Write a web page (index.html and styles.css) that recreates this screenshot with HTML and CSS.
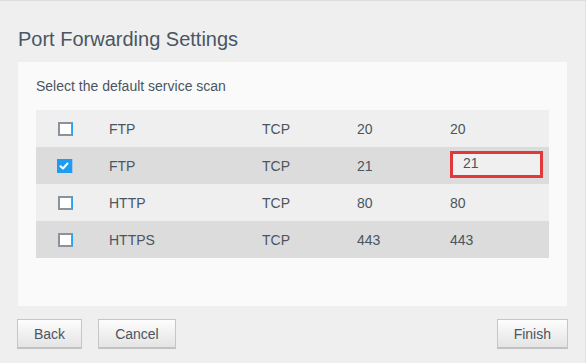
FILE: index.html
```html
<!DOCTYPE html>
<html>
<head>
<meta charset="utf-8">
<link rel="stylesheet" href="styles.css">
</head>
<body>
<div class="page">
  <h1 class="title">Port Forwarding Settings</h1>
  <div class="panel">
    <p class="lead">Select the default service scan</p>
    <div class="table">
      <div class="row">
        <span class="cell"><span class="check"></span></span>
        <span class="cell">FTP</span>
        <span class="cell">TCP</span>
        <span class="cell">20</span>
        <span class="cell">20</span>
      </div>
      <div class="row alt">
        <span class="cell"><span class="check on"><svg viewBox="0 0 14 14" width="14" height="14"><path d="M3.5 7.2 L6 9.5 L10.5 4.5" fill="none" stroke="#fff" stroke-width="2" stroke-linecap="round" stroke-linejoin="round"/></svg></span></span>
        <span class="cell">FTP</span>
        <span class="cell">TCP</span>
        <span class="cell">21</span>
        <span class="cell"><span class="input">21</span></span>
      </div>
      <div class="row">
        <span class="cell"><span class="check"></span></span>
        <span class="cell">HTTP</span>
        <span class="cell">TCP</span>
        <span class="cell">80</span>
        <span class="cell">80</span>
      </div>
      <div class="row alt">
        <span class="cell"><span class="check"></span></span>
        <span class="cell">HTTPS</span>
        <span class="cell">TCP</span>
        <span class="cell">443</span>
        <span class="cell">443</span>
      </div>
    </div>
  </div>
  <div class="actions">
    <div class="left">
      <button class="btn">Back</button>
      <button class="btn">Cancel</button>
    </div>
    <button class="btn">Finish</button>
  </div>
</div>
</body>
</html>
```
FILE: styles.css
```css
html, body {
  margin: 0;
  padding: 0;
}
body {
  background: #efefef;
  font-family: "Liberation Sans", Arial, sans-serif;
  color: #4b5561;
}
.page {
  box-sizing: border-box;
  height: 363px;
  border-top: 1px solid #dcdcdc;
  border-right: 1px solid #e2e2e2;
  padding: 0 17px 0 17px;
}
.title {
  margin: 26px 0 11px 1px;
  font-size: 20px;
  line-height: 24px;
  font-weight: normal;
  color: #4a5663;
}
.panel {
  margin: 0 1px 0 1px;
  background: #fafafa;
  padding: 16px 18px 48px 18px;
}
.lead {
  margin: 0 0 16px 0;
  font-size: 14px;
  line-height: 16px;
}
.row {
  display: grid;
  grid-template-columns: 52px 153px 95px 93px 1fr;
  align-items: center;
  height: 37px;
  padding-left: 21px;
  background: #efefef;
  font-size: 14px;
}
.row.alt {
  background: #dcdcdc;
}
.cell {
  display: flex;
  align-items: center;
}
.check {
  box-sizing: border-box;
  width: 15px;
  height: 14px;
  margin-left: 1px;
  background: #fff;
  border: 2px solid #8a939b;
  border-right: 1px solid #2aa1f0;
  box-shadow: inset -1px 0 0 #8a939b;
}
.check.on {
  width: 16px;
  margin-left: 0;
  border: none;
  background: #1e9df0;
  box-shadow: inset -1px 0 0 #a9c6ee;
  display: flex;
}
.check.on svg {
  display: block;
}
.input {
  box-sizing: border-box;
  width: 93px;
  height: 27px;
  border: 3px solid #e2383b;
  background: #f0f0f0;
  padding-left: 10px;
  line-height: 19px;
  margin-top: -3px;
}
.actions {
  display: flex;
  justify-content: space-between;
  margin-top: 13px;
}
.left {
  display: flex;
  gap: 16px;
}
.btn {
  height: 30px;
  padding: 0 16px;
  font-family: "Liberation Sans", Arial, sans-serif;
  font-size: 14px;
  color: #4b5561;
  background: linear-gradient(#fdfdfd, #e4e4e4);
  border: 1px solid #c6c6c6;
  border-bottom: 2px solid #c2c2c2;
  border-radius: 0;
}
```
